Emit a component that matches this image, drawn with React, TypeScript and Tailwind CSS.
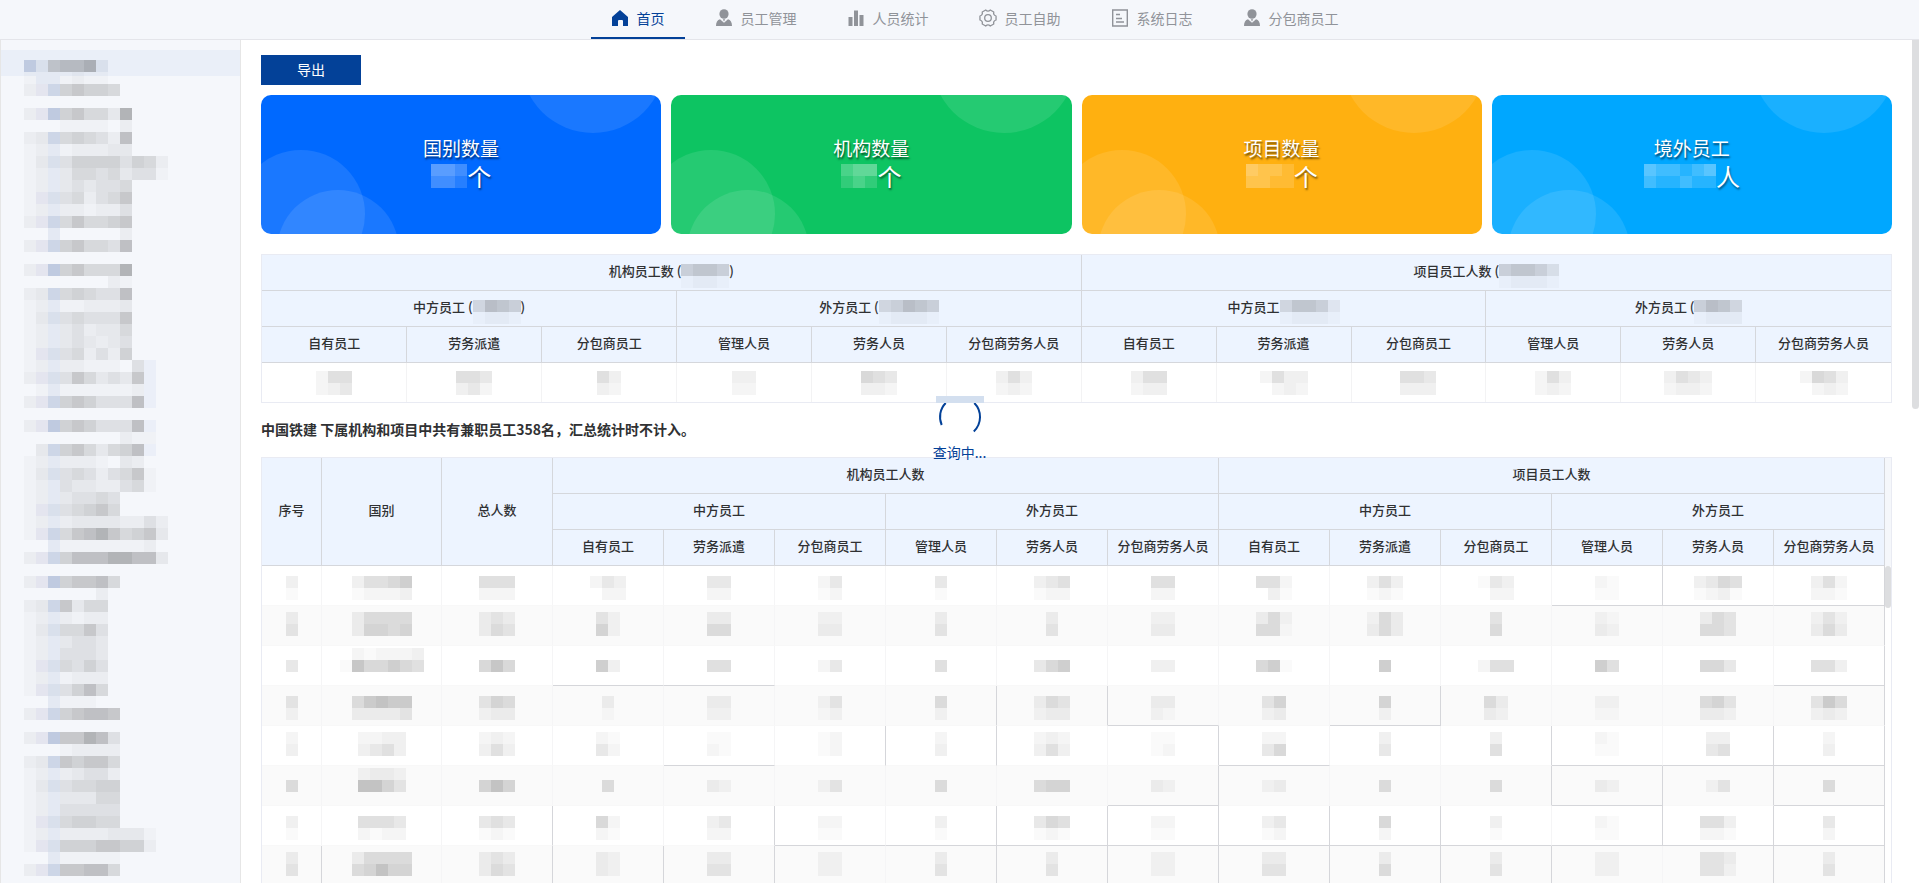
import React from "react";
import clsx from "clsx";

// Shades used by the masked values, one character per 12px cell
const SHADES: Record<string, string> = {
  ".": "",
  "1": "bg-black/2",
  "2": "bg-black/4",
  "3": "bg-black/6",
  "4": "bg-black/9",
  "5": "bg-black/12",
  "6": "bg-black/15",
  "7": "bg-black/19",
  "8": "bg-black/22",
  "9": "bg-black/27",
  A: "bg-[#e4e9f3]",
  B: "bg-[#d9e0ec]",
  C: "bg-[#cdd6e7]",
  D: "bg-[#bfcae0]",
  L: "bg-[#e4e5ef]",
  W: "bg-[#ebeff8]",
  x: "bg-white/15",
  y: "bg-white/25",
  z: "bg-white/35",
};

const TREE_ROWS = [
  "1AA1211", "2LC67665", "", "2LD675539", "...1111.2", "23C565428", "12A122233",
  "13B466664652", "12A355453441", "12A343445", "1LB452457", "12A221224", "2LC575567",
  "..A.....2", "2LC675548", "", "2LD675559", ".......21", "23C565448", "12A112223",
  "13B454447", "12A342335", "12A343234", "1LB452426", "12A22111.4W", "2LB4753437W",
  ".1A1111112W", "2LC6764448W", "", "2LD6764448W", "........211", ".3C6753568W",
  "12A2221.32", "13B45424571", "12A43322451", "12A34454", "1LB45675", "12A233332242",
  "1LC578975673", "..A11111112", "2LC688899883", "", "2LD67785", "......2", "23C7355",
  "12A2122", "13B5574", "12A3443", "12A4443", "1LB5464", "12A1222", "1LB4685", "..A111",
  "2LC67887", "", "2LD77984", "...12222", "23C76775", "12A23442", "13B45566", "12A33355",
  "12A44444", "1LB56655", "12A22223331", "1LB66677662", "..A11111", "2LC77885",
];

const CARDS = [
  { title: "国别数量", unit: "个", mask: "zzy/yyx", color: "bg-[#0069ff]" },
  { title: "机构数量", unit: "个", mask: "yzz/xyx", color: "bg-[#0dc462]" },
  { title: "项目数量", unit: "个", mask: "zyyx/yyxx", color: "bg-[#ffb010]" },
  { title: "境外员工", unit: "人", mask: "zyyxyz/yxxyxx", color: "bg-[#00a7ff]" },
];

const CHINESE = ["自有员工", "劳务派遣", "分包商员工"];
const FOREIGN = ["管理人员", "劳务人员", "分包商劳务人员"];
const LEAVES = [...CHINESE, ...FOREIGN, ...CHINESE, ...FOREIGN];

const SUMMARY = [
  "255/234", "554/342", "53/32", "33/22", "654/332", "353/232",
  "355/233", "2533/.232", "554/333", "253/232", "3543/2332", "2653/.232",
];

// v / h: which cells keep a full right / bottom rule
const DETAIL = [
  {
    v: "000000000000101", h: "000000000000111",
    cells: ["3/1", "35567/12223", "555/222", "243/.22", "44/22", "24/12", "4/1", "345/122",
      "55/22", "552/.31", "353/121", "143/.22", "21/11", "3465/1231", "352/221"],
  },
  {
    v: "000000000000001", h: "000000000000000",
    cells: ["3/4", "35555/36656", "343/354", "42/62", "33/55", "22/33", "3/4", "3/4",
      "22/33", "352/551", "253/353", "4/5", "21/32", "354/554", "242/353"],
  },
  {
    v: "000000000000001", h: "000110000000001",
    cells: ["./4", ".212223/1866765", ".../686", "../73", "../55", "../24", "./5", ".../467",
      "../33", ".../671", "./7", ".../255", "../75", ".../664", ".../553"],
  },
  {
    v: "000000110010001", h: "000000001010000",
    cells: ["4/2", "57877/33334", "465/233", "3/1", "33/22", "24/12", "5/2", "354/233",
      "33/21", "46/23", "6/2", "53/32", "22/11", "564/332", "475/232"],
  },
  {
    v: "000001101001011", h: "000010000100111",
    cells: ["2/3", "2233/3453", "232/353", "21/42", "11/21", "12/12", "2/3", "232/353",
      "11/12", "22/46", "3/4", "3/5", "21/11", "33/45", "2/3"],
  },
  {
    v: "000000001001111", h: "000000001000101",
    cells: ["./5", "2332/8864", ".../686", "./5", "../32", "../24", "./5", ".../566",
      "../32", "../23", "./5", "./5", "../32", "../24", "./5"],
  },
  {
    v: "001010111110111", h: "000001111111111",
    cells: ["3/1", "5554/2122", "454/121", "62/21", "34/22", "22/11", "3/1", "465/121",
      "22/11", "34/12", "6/2", "3/1", "21/11", "553/221", "4/2"],
  },
  {
    v: "101110111111011", h: "111111111111111",
    cells: ["3/4", "35555/56866", "343/354", "32/32", "33/44", "22/22", "3/4", "3/4",
      "22/22", "33/44", "3/5", "3/4", "22/22", "443/442", "3/4"],
  },
];

const CellRow = ({ row }: { row: string }) => (
  <span className="flex h-3">
    {row.split("").map((c, i) => (
      <span key={i} className={clsx("size-3", SHADES[c])} />
    ))}
  </span>
);

const Masked = ({ value }: { value: string }) => (
  <span className="inline-flex flex-col" aria-hidden="true">
    {value.split("/").map((row, i) => (
      <CellRow key={i} row={row} />
    ))}
  </span>
);

const HomeIcon = () => (
  <svg viewBox="0 0 18 18" className="size-[18px]" fill="currentColor">
    <path d="M9 1 17 8v9h-5v-5a1 1 0 0 0-1-1H8a1 1 0 0 0-1 1v5H1V8z" />
  </svg>
);

const PersonIcon = () => (
  <svg viewBox="0 0 18 18" className="size-[18px]" fill="currentColor">
    <ellipse cx="9" cy="5" rx="4.600" ry="4.800" />
    <path d="M5 10.200 9 13.800l4-3.600c2.600.8 4 2.800 4 6.800H1c0-4 1.400-6 4-6.800zM7.800 10.300h2.400L9 12.400z" />
  </svg>
);

const BarsIcon = () => (
  <svg viewBox="0 0 18 18" className="size-[18px]" fill="currentColor">
    <path d="M1.500 8h4v9h-4zM7 1.500h4V17H7zM12.500 6h4v11h-4z" />
  </svg>
);

const GearIcon = () => (
  <svg
    viewBox="0 0 18 18"
    className="size-[18px]"
    fill="none"
    stroke="currentColor"
    strokeWidth="1.300"
    strokeLinejoin="round"
  >
    <path d="M17.050 7V11Q14 11.900 14.770 14.970L11.290 16.980Q9 14.800 6.710 16.980L3.230 14.970Q4 11.900.95 11V7Q4 6.100 3.230 3.030L6.710 1.020Q9 3.200 11.290 1.020L14.770 3.030Q14 6.100 17.050 7Z" />
    <circle cx="9" cy="9" r="3.300" />
  </svg>
);

const LogIcon = () => (
  <svg viewBox="0 0 18 18" className="size-[18px]" fill="none" stroke="currentColor" strokeWidth="1.400">
    <path d="M1.700 1h14.600v16H1.700zM5 5.500h4M5 9.500h6M5 13h8" />
  </svg>
);

const NAV = [
  { label: "首页", icon: <HomeIcon />, active: true },
  { label: "员工管理", icon: <PersonIcon /> },
  { label: "人员统计", icon: <BarsIcon /> },
  { label: "员工自助", icon: <GearIcon /> },
  { label: "系统日志", icon: <LogIcon /> },
  { label: "分包商员工", icon: <PersonIcon /> },
];

const TopNav = () => (
  <nav className="flex h-10 shrink-0 justify-center gap-2.5 border-b border-[#e4e5ea] bg-[#f5f7fb] pl-[30px]">
    {NAV.map((item) => (
      <button
        key={item.label}
        type="button"
        className={clsx(
          "flex items-center gap-2 border-b-2 px-5 pb-0.5",
          item.active ? "border-[#034198] text-[#034198]" : "border-transparent text-[#909399]"
        )}
      >
        {item.icon}
        {item.label}
      </button>
    ))}
  </nav>
);

const Sidebar = () => (
  <aside className="w-[241px] shrink-0 overflow-hidden border-x border-[#e6e6e6] bg-[#f5f7fb] pt-2.5">
    <div className="h-[26px] bg-[#eaeff8] pt-2.5 pl-[23px]">
      <CellRow row="DB7889B" />
    </div>
    <div className="-mt-1 pl-[23px]">
      {TREE_ROWS.map((row, i) => (
        <CellRow key={i} row={row} />
      ))}
    </div>
  </aside>
);

const StatCard = ({ title, unit, mask, color }: (typeof CARDS)[number]) => (
  <section
    className={clsx(
      "relative flex h-[139px] flex-col items-center justify-center overflow-hidden rounded-[10px] pb-1.5 text-white",
      color
    )}
  >
    <span className="absolute top-[55px] -left-6 size-32 rounded-full bg-white/10" />
    <span className="absolute top-[95px] left-4 size-[122px] rounded-full bg-white/10" />
    <span className="absolute -top-[106px] -right-1 size-36 rounded-full bg-white/10" />
    <h2 className="text-[19px] leading-7 text-shadow-[1px_2px_2px_rgba(0,0,0,0.6)]">{title}</h2>
    <p className="flex items-center text-2xl leading-7 text-shadow-[1px_2px_2px_rgba(0,0,0,0.5)]">
      <Masked value={mask} />
      {unit}
    </p>
  </section>
);

const HEAD = "border-r border-b border-[#d5d7dc] bg-[#edf4ff] p-0 font-medium";

type HeadProps = {
  children: React.ReactNode;
  mask?: string;
  close?: boolean;
  colSpan?: number;
  rowSpan?: number;
};

const Head = ({ children, mask, close, colSpan, rowSpan }: HeadProps) => (
  <th colSpan={colSpan} rowSpan={rowSpan} className={HEAD}>
    <div className="flex h-[35px] items-center justify-center pb-0.5 whitespace-pre">
      {children}
      {mask && (
        <span className="flex pt-2">
          <Masked value={mask} />
        </span>
      )}
      {close && ")"}
    </div>
  </th>
);

const SummaryTable = () => (
  <div className="mt-5 border border-[#e9ebf3]">
    <table className="w-full table-fixed border-separate border-spacing-0 text-center text-[13px] [&_tr>:last-child]:border-r-0">
      <colgroup>
        {LEAVES.map((_, i) => (
          <col key={i} className={i ? "w-[8.28%]" : ""} />
        ))}
      </colgroup>
      <thead>
        <tr>
          <Head colSpan={6} mask="6776/1221" close>机构员工数 (</Head>
          <Head colSpan={6} mask="67764/12221">项目员工人数 (</Head>
        </tr>
        <tr>
          <Head colSpan={3} mask="5876/1221" close>中方员工 (</Head>
          <Head colSpan={3} mask="56876/12221">外方员工 (</Head>
          <Head colSpan={3} mask="57763/12221">中方员工</Head>
          <Head colSpan={3} mask="6875/1222">外方员工 (</Head>
        </tr>
        <tr>
          {LEAVES.map((label, i) => (
            <Head key={i}>{label}</Head>
          ))}
        </tr>
      </thead>
      <tbody>
        <tr>
          {SUMMARY.map((value, i) => (
            <td key={i} className="border-r border-[#f3f3f4] p-0">
              <div className="flex h-[39px] items-center justify-center">
                <Masked value={value} />
              </div>
            </td>
          ))}
        </tr>
      </tbody>
    </table>
  </div>
);

const ROW_PAD = ["pt-2.5", "pt-1.5", "pt-0.5"];

const DetailTable = () => (
  <div className="flex border border-[#e9ebf3]">
    <table className="w-full table-fixed border-separate border-spacing-0 text-center text-[13px]">
      <colgroup>
        <col className="w-[60px]" />
        <col className="w-[120px]" />
        <col span={13} />
      </colgroup>
      <thead>
        <tr>
          <Head rowSpan={3}>序号</Head>
          <Head rowSpan={3}>国别</Head>
          <Head rowSpan={3}>总人数</Head>
          <Head colSpan={6}>机构员工人数</Head>
          <Head colSpan={6}>项目员工人数</Head>
        </tr>
        <tr>
          <Head colSpan={3}>中方员工</Head>
          <Head colSpan={3}>外方员工</Head>
          <Head colSpan={3}>中方员工</Head>
          <Head colSpan={3}>外方员工</Head>
        </tr>
        <tr>
          {LEAVES.map((label, i) => (
            <Head key={i}>{label}</Head>
          ))}
        </tr>
      </thead>
      <tbody>
        {DETAIL.map((row, r) => (
          <tr key={r} className="even:bg-[#fafafa]">
            {row.cells.map((value, i) => (
              <td
                key={i}
                className={clsx(
                  "border-r border-b p-0",
                  row.v[i] === "1" ? "border-r-[#d5d6da]" : "border-r-[#f5f5f6]",
                  row.h[i] === "1" ? "border-b-[#d5d6da]" : "border-b-[#f8f8f8]"
                )}
              >
                <div className={clsx("flex h-[39px] justify-center", ROW_PAD[r % 3])}>
                  <Masked value={value} />
                </div>
              </td>
            ))}
          </tr>
        ))}
      </tbody>
    </table>
    {/* Scrollbar gutter */}
    <div className="w-1.5 shrink-0">
      <div className="h-[108px] bg-[#f5f7fb]" />
      <div className="h-[42px] rounded-full bg-[#dddee0]" />
    </div>
  </div>
);

const Loading = () => (
  <div className="absolute inset-x-0 top-[396px] flex flex-col items-center text-[#034198]" role="status">
    <svg viewBox="0 0 48 42" className="h-[42px] w-12" fill="none" stroke="currentColor" strokeWidth="2">
      <path d="M9.700 7A20 20 0 0 0 5.700 29M38.300 7A20 20 0 0 1 37.800 35.500" />
      <path d="M0 0h48v7H0z" fill="#d3dfef" stroke="none" />
    </svg>
    <p className="mt-1">查询中...</p>
  </div>
);

export default function App() {
  return (
    <div className="relative flex h-screen flex-col overflow-hidden bg-white font-['Noto_Sans_CJK_SC',sans-serif] text-sm text-[#303133]">
      <TopNav />
      <div className="flex min-h-0 flex-1">
        <Sidebar />
        <main className="relative min-w-0 flex-1 overflow-hidden pt-[15px] pr-[27px] pl-5">
          <button type="button" className="block h-[30px] w-[100px] bg-[#034198] pb-0.5 text-white">
            导出
          </button>
          <div className="mt-2.5 grid grid-cols-4 gap-2.5">
            {CARDS.map((card) => (
              <StatCard key={card.title} {...card} />
            ))}
          </div>
          <SummaryTable />
          <p className="flex h-[54px] items-center pb-0.5 font-bold">
            中国铁建 下属机构和项目中共有兼职员工358名，汇总统计时不计入。
          </p>
          <DetailTable />
          <span className="absolute top-0 right-0 h-[369px] w-[7px] rounded-b-full bg-[#dddee0]" />
        </main>
      </div>
      <Loading />
    </div>
  );
}
